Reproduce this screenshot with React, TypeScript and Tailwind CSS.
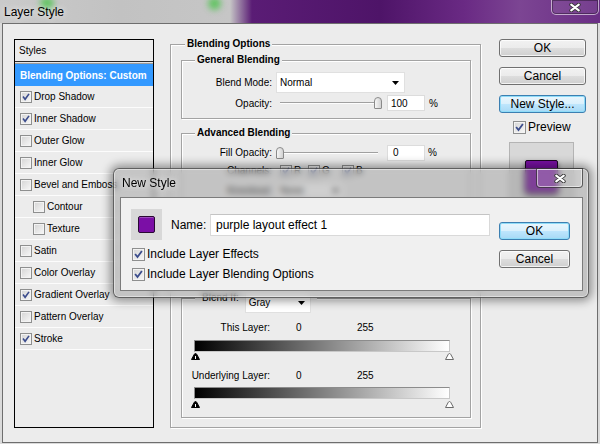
import React from "react";

function Check({ checked, big }: { checked?: boolean; big?: boolean }) {
  return (
    <span
      className={`${big ? "w-[13px] h-[13px]" : "w-[12px] h-[12px]"} shrink-0 border border-[#8e8f8f] bg-[linear-gradient(135deg,#d4d4d4_0%,#f8f8f8_100%)] shadow-[inset_0_0_0_1px_#f3f3f3] flex items-center justify-center`}
    >
      {checked && (
        <svg width={big ? 9 : 8} height={big ? 9 : 8} viewBox="0 0 8 8">
          <path d="M1 3.6 L3.1 6.3 L7 0.9" fill="none" stroke="#3b4c8c" strokeWidth="1.6" />
        </svg>
      )}
    </span>
  );
}

function Arrow() {
  return (
    <svg width="7" height="4" viewBox="0 0 7 4">
      <path d="M0 0 H7 L3.5 4 Z" fill="#000" />
    </svg>
  );
}

function XGlyph() {
  return (
    <svg width="12" height="9" viewBox="0 0 12 9">
      <path d="M2.2 1.6 L9.8 7.4 M9.8 1.6 L2.2 7.4" stroke="#333" strokeWidth="3.8" strokeLinecap="round" />
      <path d="M2.2 1.6 L9.8 7.4 M9.8 1.6 L2.2 7.4" stroke="#fff" strokeWidth="2.1" strokeLinecap="round" />
    </svg>
  );
}

function Btn({ label, primary, className }: { label: string; primary?: boolean; className: string }) {
  return (
    <div
      className={`${className} h-[18px] shrink-0 rounded-[3px] border flex items-center justify-center text-[12px] leading-none text-black ${
        primary
          ? "border-[#3c7fb1] bg-[linear-gradient(180deg,#eaf6fd_0%,#d9f0fc_50%,#bee6fd_51%,#a7d9f5_100%)] shadow-[inset_0_0_0_1px_#8fdcf8]"
          : "border-[#707070] bg-[linear-gradient(180deg,#f2f2f2_0%,#ebebeb_50%,#dddddd_51%,#cfcfcf_100%)] shadow-[inset_0_0_0_1px_rgba(255,255,255,0.75)]"
      }`}
    >
      {label}
    </div>
  );
}

function Slider({ right }: { right?: boolean }) {
  return (
    <div className="relative w-[108px] h-[16px] shrink-0">
      <div className="absolute left-[4px] right-[6px] top-[7px] h-[2px] border-t border-[#a0a0a0] bg-[#fdfdfd]" />
      <div
        className={`absolute top-[2px] ${right ? "left-[98px]" : "left-0"} w-[8px] h-[12px] rounded-t-[4px] rounded-b-[1px] border border-[#8a8a8a] bg-[linear-gradient(90deg,#f6f6f6,#d2d2d2)]`}
      />
    </div>
  );
}

function Marker({ white }: { white?: boolean }) {
  return (
    <svg width="9" height="7" viewBox="0 0 9 7">
      <path
        d="M4.5 0.5 C5.3 0.5 5.7 1.2 6.1 2 L8.5 6.5 H0.5 L2.9 2 C3.3 1.2 3.7 0.5 4.5 0.5 Z"
        fill={white ? "#fff" : "#000"}
        stroke={white ? "#6a6a6a" : "#000"}
        strokeWidth="1"
      />
      {!white && <rect x="4" y="3" width="1" height="3" fill="#fff" />}
    </svg>
  );
}

const rows: { label: string; checked?: boolean; indent?: boolean }[] = [
  { label: "Drop Shadow", checked: true },
  { label: "Inner Shadow", checked: true },
  { label: "Outer Glow" },
  { label: "Inner Glow" },
  { label: "Bevel and Emboss" },
  { label: "Contour", indent: true },
  { label: "Texture", indent: true },
  { label: "Satin" },
  { label: "Color Overlay" },
  { label: "Gradient Overlay", checked: true },
  { label: "Pattern Overlay" },
  { label: "Stroke", checked: true },
];

const groupBox = "relative border border-[#a3a3a3] shadow-[inset_1px_1px_0_#fff,1px_1px_0_#fff]";
const legend = "absolute top-[-7px] px-[2px] bg-[#ececec] font-bold text-[10px] leading-[12px] whitespace-nowrap";

export default function App() {
  return (
    <div className="relative w-[600px] h-[444px] overflow-hidden bg-[#dadada] font-['Liberation_Sans',Arial,sans-serif] text-black">
      {/* title bar */}
      <div className="relative h-[23px] flex items-center pl-[4px] bg-[linear-gradient(90deg,#cacaca_0px,#c2c2c2_120px,#c6c6c6_230px,#5a1c75_252px,#4e1468_380px,#6a2a84_465px,#7c4593_520px,#6a2d85_600px)]">
        <div className="absolute left-[40px] top-[-3px] w-[14px] h-[13px] rounded-full bg-[#62c462] blur-[3px]" />
        <div className="absolute left-[208px] top-[-3px] w-[13px] h-[13px] rounded-full bg-[#62c462] blur-[3px]" />
        <span className="relative text-[12px] leading-none text-black [text-shadow:0_0_6px_#fff]">Layer Style</span>
        <div className="absolute left-[551px] top-[-1px] w-[48px] h-[16px] rounded-b-[5px] border border-[rgba(255,255,255,0.55)] shadow-[inset_0_0_0_1px_rgba(0,0,0,0.35)] bg-[rgba(255,255,255,0.08)] flex items-center justify-center">
          <XGlyph />
        </div>
      </div>

      {/* client */}
      <div className="ml-[2px] w-[596px] h-[420px] border border-[#6e6e6e] bg-[#ececec] flex items-start pl-[11px] pt-[15px]">
        {/* styles list */}
        <div className="w-[140px] h-[389px] border border-black flex flex-col shrink-0 text-[10px]">
          <div className="h-[21px] flex items-center pl-[4px]">Styles</div>
          <div className="h-[3px] border-t border-[#2a2a2a] border-b border-b-[#9a9a9a] bg-[#e4e4e4]" />
          <div className="h-[22px] bg-[#3399ff] text-white font-bold flex items-center pl-[5px] whitespace-nowrap">
            Blending Options: Custom
          </div>
          {rows.map((r) => (
            <div
              key={r.label}
              className={`h-[22px] border-b border-[#fcfcfc] flex items-center gap-[2px] whitespace-nowrap overflow-hidden ${r.indent ? "pl-[18px]" : "pl-[5px]"}`}
            >
              <Check checked={r.checked} />
              <span>{r.label}</span>
            </div>
          ))}
        </div>

        {/* Blending options */}
        <div className={`${groupBox} ml-[16px] mt-[5px] w-[311px] h-[384px] pl-[10px] pt-[15px] shrink-0 text-[10px]`}>
          <span className={`${legend} left-[14px]`}>Blending Options</span>

          {/* General */}
          <div className={`${groupBox} w-[290px] h-[59px] pt-[11px]`}>
            <span className={`${legend} left-[13px]`}>General Blending</span>
            <div className="h-[21px] flex items-center">
              <span className="w-[90px] text-right">Blend Mode:</span>
              <div className="ml-[4px] w-[129px] h-[21px] bg-white border border-[#e0e0e0] flex items-center justify-between pl-[3px] pr-[5px]">
                <span>Normal</span>
                <Arrow />
              </div>
            </div>
            <div className="mt-[2px] h-[16px] flex items-center">
              <span className="w-[90px] text-right">Opacity:</span>
              <div className="ml-[4px]">
                <Slider right />
              </div>
              <div className="ml-[3px] w-[38px] h-[16px] bg-white border border-[#dcdcdc] flex items-center pl-[3px]">100</div>
              <span className="ml-[4px]">%</span>
            </div>
          </div>

          {/* Advanced */}
          <div className={`${groupBox} mt-[14px] w-[290px] h-[155px] pt-[10px]`}>
            <span className={`${legend} left-[13px]`}>Advanced Blending</span>
            <div className="h-[17px] flex items-center">
              <span className="w-[90px] text-right">Fill Opacity:</span>
              <div className="ml-[4px]">
                <Slider />
              </div>
              <div className="ml-[3px] w-[38px] h-[16px] bg-white border border-[#dcdcdc] flex items-center pl-[5px]">0</div>
              <span className="ml-[3px]">%</span>
            </div>
            <div className="mt-[1px] h-[17px] flex items-center">
              <span className="w-[90px] text-right">Channels:</span>
              <div className="ml-[8px] w-[28px] flex items-center gap-[2px]">
                <Check checked />
                <span>R</span>
              </div>
              <div className="w-[34px] flex items-center gap-[2px]">
                <Check checked />
                <span>G</span>
              </div>
              <div className="flex items-center gap-[2px]">
                <Check checked />
                <span>B</span>
              </div>
            </div>
            <div className="mt-[3px] h-[17px] flex items-center">
              <span className="w-[90px] text-right">Knockout:</span>
              <div className="ml-[4px] w-[68px] h-[17px] bg-white border border-[#e0e0e0] flex items-center justify-between pl-[3px] pr-[4px]">
                <span>None</span>
                <Arrow />
              </div>
            </div>
          </div>

          {/* Blend If */}
          <div className={`${groupBox} mt-[10px] w-[290px] h-[120px] pt-[21px]`}>
            <div className="absolute top-[-7px] left-[13px] h-[21px] flex items-start bg-[#ececec] pl-[7px] pr-[6px]">
              <span className="leading-[12px]">Blend If:</span>
              <div className="ml-[6px] w-[66px] h-[21px] bg-white border border-[#e0e0e0] flex items-center justify-between pl-[3px] pr-[5px]">
                <span>Gray</span>
                <Arrow />
              </div>
            </div>
            <div className="h-[14px] flex items-center">
              <span className="w-[88px] text-right">This Layer:</span>
              <span className="ml-[26px] w-[61px]">0</span>
              <span>255</span>
            </div>
            <div className="mt-[6px] ml-[12px] w-[256px] h-[12px] border border-[#8c8c8c] border-r-[#c8c8c8] border-b-[#c8c8c8] bg-[linear-gradient(90deg,#000,#fff)]" />
            <div className="mt-[1px] ml-[9px] w-[263px] h-[7px] flex justify-between">
              <Marker />
              <Marker white />
            </div>
            <div className="mt-[8px] h-[14px] flex items-center">
              <span className="w-[88px] text-right">Underlying Layer:</span>
              <span className="ml-[26px] w-[61px]">0</span>
              <span>255</span>
            </div>
            <div className="mt-[5px] ml-[12px] w-[256px] h-[12px] border border-[#8c8c8c] border-r-[#c8c8c8] border-b-[#c8c8c8] bg-[linear-gradient(90deg,#000,#fff)]" />
            <div className="mt-[2px] ml-[9px] w-[263px] h-[7px] flex justify-between">
              <Marker />
              <Marker white />
            </div>
          </div>
        </div>

        {/* right column */}
        <div className="ml-[18px] w-[87px] flex flex-col shrink-0">
          <Btn label="OK" className="w-[87px]" />
          <Btn label="Cancel" className="w-[87px] mt-[10px]" />
          <Btn label="New Style..." primary className="w-[87px] mt-[10px]" />
          <div className="mt-[7px] h-[14px] flex items-center pl-[14px] gap-[2px] text-[12px]">
            <Check checked big />
            <span>Preview</span>
          </div>
          <div className="mt-[8px] ml-[10px] w-[65px] h-[65px] border border-[#b4b4b4] bg-[#d8d8d8] flex justify-center pt-[17px]">
            <div className="w-[33px] h-[33px] bg-[#7a10a5] border border-[#1c0524] rounded-[2px] shadow-[0_3px_5px_rgba(0,0,0,0.55)]" />
          </div>
        </div>
      </div>

      {/* New Style dialog */}
      <div className="absolute left-[113px] top-[168px] w-[476px] h-[130px] rounded-[6px] border border-[rgba(30,30,30,0.6)] bg-[rgba(136,136,136,0.4)] backdrop-blur-[3px] shadow-[0_0_10px_3px_rgba(0,0,0,0.4),inset_0_0_0_1px_rgba(255,255,255,0.45)] pl-[6px] pt-[28px]">
        <span className="absolute left-[8px] top-[7px] text-[12px] leading-[14px] text-black [text-shadow:0_0_6px_#fff]">New Style</span>
        <div className="absolute right-[5px] top-[-1px] w-[47px] h-[20px] rounded-b-[4px] border border-[rgba(40,40,40,0.7)] shadow-[inset_0_0_0_1px_rgba(255,255,255,0.55)] bg-[rgba(255,255,255,0.15)] flex items-center justify-center">
          <XGlyph />
        </div>
        <div className="w-[463px] h-[94px] border border-[#7b7b7b] bg-[#f0f0f0] flex text-[12px]">
          <div className="pl-[10px] pt-[11px] flex flex-col">
            <div className="flex items-center">
              <div className="w-[31px] h-[31px] bg-[#d8d8d8] flex items-center justify-center shrink-0">
                <div className="w-[17px] h-[17px] rounded-[2px] border border-[#2a0a33] bg-[#7b0fa6] shadow-[inset_0_1px_0_rgba(255,255,255,0.25)]" />
              </div>
              <span className="ml-[9px] w-[39px]">Name:</span>
              <div className="w-[280px] h-[22px] bg-white border border-[#d9d9d9] border-t-[#c4c4c4] flex items-center pl-[5px]">
                purple layout effect 1
              </div>
            </div>
            <div className="mt-[4px] h-[20px] flex items-center gap-[2px] pl-[1px]">
              <Check checked big />
              <span>Include Layer Effects</span>
            </div>
            <div className="h-[20px] flex items-center gap-[2px] pl-[1px]">
              <Check checked big />
              <span>Include Layer Blending Options</span>
            </div>
          </div>
          <div className="ml-[9px] pt-[24px] flex flex-col">
            <Btn label="OK" primary className="w-[71px]" />
            <Btn label="Cancel" className="w-[71px] mt-[10px]" />
          </div>
        </div>
      </div>
    </div>
  );
}
